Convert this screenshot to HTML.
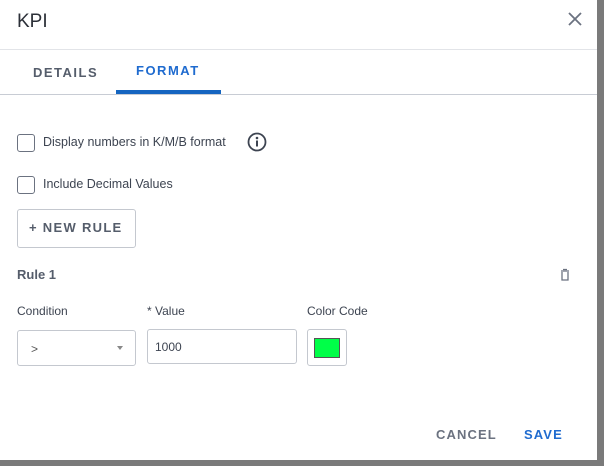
<!DOCTYPE html>
<html><head><style>
*{margin:0;padding:0;box-sizing:border-box}
body{width:604px;height:466px;background:#7a7a7a;position:relative;overflow:hidden;font-family:"Liberation Sans",sans-serif;color:#3d4451}
#d{position:absolute;left:0;top:0;width:597px;height:460px;background:#fff}
.a{position:absolute;white-space:nowrap}
.cb{position:absolute;width:18px;height:18px;border:1.5px solid #6b7280;border-radius:3px}
.box{position:absolute;border:1px solid #c4c8cf;border-radius:3px;background:#fff}
</style></head><body>
<div id="d">
<div class="a" style="left:17px;top:11px;font-size:19px;color:#2c3038">KPI</div>
<svg class="a" style="left:567px;top:11px" width="16" height="16"><path d="M2 2L14 14M14 2L2 14" stroke="#6b7280" stroke-width="1.8"/></svg>
<div class="a" style="left:0;top:49px;width:597px;height:1px;background:#e2e4e8"></div>
<div class="a" style="left:33px;top:65px;font-size:13px;font-weight:bold;letter-spacing:1.5px;color:#555d6b">DETAILS</div>
<div class="a" style="left:136px;top:63px;font-size:13px;font-weight:bold;letter-spacing:1.5px;color:#1f6bcf">FORMAT</div>
<div class="a" style="left:116px;top:90px;width:105px;height:4px;background:#1565c0"></div>
<div class="a" style="left:0;top:94px;width:597px;height:1px;background:#c8ccd4"></div>
<div class="cb" style="left:17px;top:134px"></div>
<div class="a" style="left:43px;top:135px;font-size:12.5px">Display numbers in K/M/B format</div>
<svg class="a" style="left:247px;top:132px" width="20" height="20"><circle cx="10" cy="10" r="8.5" fill="none" stroke="#3d4451" stroke-width="1.8"/><circle cx="10" cy="6" r="1.3" fill="#3d4451"/><rect x="9" y="8.5" width="2" height="6" fill="#3d4451"/></svg>
<div class="cb" style="left:17px;top:176px"></div>
<div class="a" style="left:43px;top:177px;font-size:12.5px">Include Decimal Values</div>
<div class="box" style="left:17px;top:209px;width:119px;height:39px"></div>
<div class="a" style="left:29px;top:220px;font-size:13px;font-weight:bold;letter-spacing:1.3px;color:#555d6b">+ NEW RULE</div>
<div class="a" style="left:17px;top:267px;font-size:13px;font-weight:bold;color:#555d6b">Rule 1</div>
<svg class="a" style="left:559px;top:268px" width="12" height="14"><path d="M2 3h8M4 1.5h4M3 4v8h6V4" fill="none" stroke="#6b7280" stroke-width="1.3"/></svg>
<div class="a" style="left:17px;top:304px;font-size:12px">Condition</div>
<div class="a" style="left:147px;top:304px;font-size:12px">* Value</div>
<div class="a" style="left:307px;top:304px;font-size:12px">Color Code</div>
<div class="box" style="left:17px;top:330px;width:119px;height:36px"></div>
<div class="a" style="left:31px;top:342px;font-size:12px;color:#555">&gt;</div>
<svg class="a" style="left:117px;top:346px" width="6" height="4"><path d="M0 0h6L3 4z" fill="#888"/></svg>
<div class="box" style="left:147px;top:329px;width:150px;height:35px"></div>
<div class="a" style="left:155px;top:340px;font-size:12px">1000</div>
<div class="box" style="left:307px;top:329px;width:40px;height:37px"></div>
<div class="a" style="left:314px;top:338px;width:26px;height:20px;background:#00ff48;border:1px solid #555"></div>
<div class="a" style="left:436px;top:427px;font-size:13px;font-weight:bold;letter-spacing:1.1px;color:#6b7280">CANCEL</div>
<div class="a" style="left:524px;top:427px;font-size:13px;font-weight:bold;letter-spacing:1.1px;color:#1f6bcf">SAVE</div>
</div>
</body></html>
